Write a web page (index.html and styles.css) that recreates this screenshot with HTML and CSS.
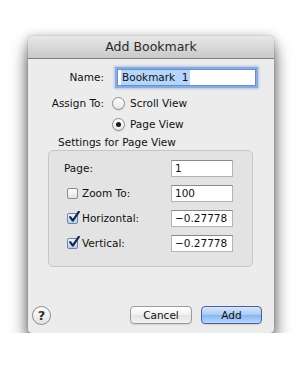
FILE: index.html
```html
<!DOCTYPE html>
<html lang="en">
<head>
  <meta charset="UTF-8">
  <title>Add Bookmark</title>
  <link rel="stylesheet" href="styles.css">
</head>
<body>
  <div class="window">
    <div class="titlebar">Add Bookmark</div>

    <div class="content">
      <div class="row row-name">
        <span class="lbl">Name:</span>
        <div class="field field-name focus"><span class="sel">Bookmark&nbsp;&nbsp;1</span></div>
      </div>
      <div class="row row-assign">
        <span class="lbl">Assign To:</span>
        <span class="radio"></span>
        <span class="opt">Scroll View</span>
      </div>
      <div class="row row-page">
        <span class="radio on"></span>
        <span class="opt">Page View</span>
      </div>

      <div class="group-title">Settings for Page View</div>
      <div class="group">
        <div class="grow">
          <span class="glbl plain">Page:</span>
          <div class="field small">1</div>
        </div>
        <div class="grow">
          <span class="check"></span>
          <span class="glbl">Zoom To:</span>
          <div class="field small">100</div>
        </div>
        <div class="grow">
          <span class="check on"><svg viewBox="0 0 12 12" width="12" height="12"><path d="M2.2 6.2 L4.8 9.6 L10.8 0.8" fill="none" stroke="#17264f" stroke-width="2.2" stroke-linejoin="round" stroke-linecap="round"/></svg></span>
          <span class="glbl">Horizontal:</span>
          <div class="field small">&minus;0.27778</div>
        </div>
        <div class="grow">
          <span class="check on"><svg viewBox="0 0 12 12" width="12" height="12"><path d="M2.2 6.2 L4.8 9.6 L10.8 0.8" fill="none" stroke="#17264f" stroke-width="2.2" stroke-linejoin="round" stroke-linecap="round"/></svg></span>
          <span class="glbl">Vertical:</span>
          <div class="field small">&minus;0.27778</div>
        </div>
      </div>
    </div>

    <div class="footer">
      <span class="help">?</span>
      <span class="spacer"></span>
      <span class="btn">Cancel</span>
      <span class="btn default">Add</span>
    </div>
  </div>
</body>
</html>
```

FILE: styles.css
```css
body {
  margin: 0;
  background: #fff;
  font-family: "DejaVu Sans", sans-serif;
  font-size: 10.5px;
  color: #111;
}

/* fenetre */
.window {
  margin: 36px 0 0 28px;
  width: 246px;
  height: 297px;
  background: #ececec;
  border-radius: 4px;
  box-shadow: 0 12px 18px rgba(0, 0, 0, 0.55), 0 2px 12px rgba(0, 0, 0, 0.3), 0 0 1px rgba(0, 0, 0, 0.5);
  display: flex;
  flex-direction: column;
  overflow: hidden;
}

.titlebar {
  height: 22px;
  line-height: 22px;
  text-align: center;
  font-size: 12.5px;
  color: #2a2a2a;
  background: linear-gradient(#e8e8e8, #c9c9c9);
  border-bottom: 1px solid #7d7d7d;
}

.content {
  padding: 8px 0 0 20px;
  flex: 1;
}

.row {
  display: flex;
  align-items: center;
  height: 20px;
}

.lbl {
  width: 56px;
  text-align: right;
}

.row-name .field-name {
  margin-left: 13px;
}

.row-assign {
  margin-top: 6px;
}

.row-assign .radio {
  margin-left: 8px;
}

.row-page {
  margin-top: 1px;
  padding-left: 64px;
}

.opt {
  margin-left: 5px;
}

/* champs */
.field {
  height: 17px;
  box-sizing: border-box;
  background: #fff;
  border: 1px solid #b4b4b4;
  border-top-color: #8a8a8a;
  padding: 0 3px;
  line-height: 15px;
  display: flex;
  align-items: center;
}

.field-name {
  width: 139px;
}

.focus {
  box-shadow: 0 0 0 2px #86ace0, 0 0 2px 3px rgba(120, 160, 220, 0.5);
  border-color: #6b8fc4;
}

.sel {
  background: #b5d5fd;
  padding: 0 1px;
}

/* radios */
.radio {
  width: 13px;
  height: 13px;
  box-sizing: border-box;
  border-radius: 50%;
  border: 1px solid #8c8c8c;
  background: linear-gradient(#fff, #e6e6e6);
  display: inline-flex;
  align-items: center;
  justify-content: center;
  box-shadow: 0 1px 1px rgba(0, 0, 0, 0.1);
}

.radio.on::after {
  content: "";
  width: 5px;
  height: 5px;
  border-radius: 50%;
  background: #1c1c1c;
}

.group-title {
  margin: 2px 0 0 10px;
  height: 13px;
  line-height: 13px;
}

.group {
  margin-top: 1px;
  width: 205px;
  height: 117px;
  box-sizing: border-box;
  background: #e3e3e3;
  border: 1px solid #c6c6c6;
  border-radius: 5px;
  padding: 7px 0 0 18px;
  display: flex;
  flex-direction: column;
  gap: 5px;
}

.grow {
  display: flex;
  align-items: center;
  height: 20px;
}

.glbl {
  width: 89px;
  margin-left: 4px;
}

.glbl.plain {
  margin-left: -3px;
  width: 107px;
}

.field.small {
  width: 62px;
}

/* cases a cocher */
.check {
  width: 11px;
  height: 11px;
  box-sizing: border-box;
  border: 1px solid #8c8c8c;
  border-radius: 2px;
  background: linear-gradient(#fff, #e4e4e4);
  position: relative;
}

.check svg {
  position: absolute;
  left: 0;
  top: -3px;
}

.check.on {
  background: linear-gradient(#eef4fc, #b9cfe9);
  border-color: #6f83a8;
}

/* bas de fenetre */
.footer {
  display: flex;
  align-items: center;
  padding: 0 12px 8px 4px;
  height: 20px;
}

.spacer {
  flex: 1;
}

.help {
  width: 19px;
  height: 19px;
  box-sizing: border-box;
  border-radius: 50%;
  border: 1px solid #8a8a8a;
  background: linear-gradient(#fff, #e2e2e2);
  text-align: center;
  line-height: 17px;
  font-size: 13px;
  font-weight: bold;
  color: #333;
}

.btn {
  width: 62px;
  height: 18px;
  box-sizing: border-box;
  border: 1px solid #9a9a9a;
  border-radius: 4px;
  background: linear-gradient(#ffffff, #f0f0f0 50%, #e4e4e4 51%, #f2f2f2);
  text-align: center;
  line-height: 16px;
  margin-left: 9px;
  box-shadow: 0 1px 1px rgba(0, 0, 0, 0.1);
}

.btn.default {
  width: 61px;
  border-color: #4f5f9c;
  background: linear-gradient(#d5e6fb, #a9caf2 50%, #86b5ef 51%, #b9d8fb);
}
```
